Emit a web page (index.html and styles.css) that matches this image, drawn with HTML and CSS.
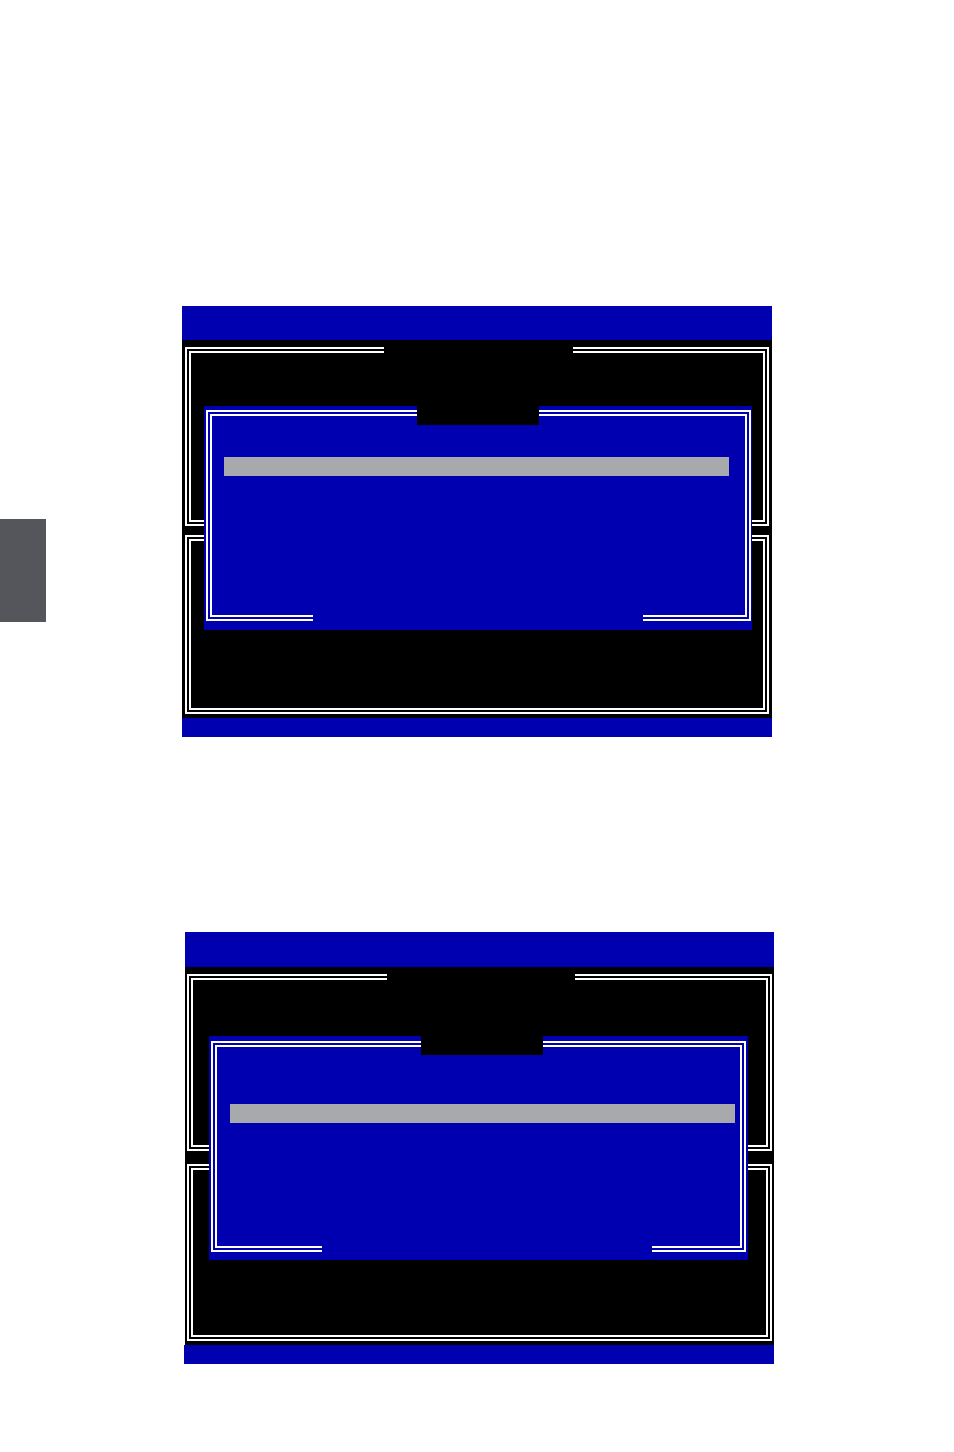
FILE: index.html
```html
<!DOCTYPE html>
<html lang="en">
  <head>
    <meta charset="UTF-8" />
    <title>RAID Setup</title>
    <link rel="stylesheet" href="styles.css">
  </head>
  <body>
    <div class="page">
      <div class="row-first">
        <div class="side-tab"></div>

        <div class="screen screen-a">
          <div class="screen-head"></div>
          <div class="screen-body">
            <div class="frame">
              <div class="frame-title"></div>
            </div>
            <div class="frame"></div>

            <div class="dialog">
              <div class="dialog-frame">
                <div class="dialog-title"></div>
                <div class="dialog-item selected"></div>
                <div class="dialog-foot"></div>
              </div>
            </div>
          </div>
          <div class="screen-foot"></div>
        </div>
      </div>

      <div class="screen screen-b">
        <div class="screen-head"></div>
        <div class="screen-body">
          <div class="frame">
            <div class="frame-title"></div>
          </div>
          <div class="frame"></div>

          <div class="dialog">
            <div class="dialog-frame">
              <div class="dialog-title"></div>
              <div class="dialog-item selected"></div>
              <div class="dialog-foot"></div>
            </div>
          </div>
        </div>
        <div class="screen-foot"></div>
      </div>
    </div>
  </body>
</html>
```

FILE: styles.css
```css
* {
  box-sizing: border-box;
}

body {
  margin: 0;
  background-color: #ffffff;
  font-family: "Liberation Sans", Arial, sans-serif;
}

.page {
  padding-top: 306px;
  padding-bottom: 88px;
}

.row-first {
  display: flex;
  align-items: flex-start;
}

/* chapter tab on the page edge */
.side-tab {
  width: 46px;
  height: 103px;
  margin-top: 213px;
  background: #55565b;
}

/* bios screen */
.screen {
  background: #000000;
}

.screen-head,
.screen-foot {
  background: #0000b0;
}

.screen-foot {
  height: 19px;
}

.screen-body {
  position: relative;
  height: 378px;
  display: flex;
  flex-direction: column;
}

.frame {
  border: 6px double #ffffff;
}

.frame-title {
  height: 6px;
  margin-top: -6px;
  background: #000000;
}

/* popup window over the frames */
.dialog {
  position: absolute;
  height: 224px;
  background: #0000b0;
}

.dialog-frame {
  height: 211px;
  border: 6px double #ffffff;
  display: flex;
  flex-direction: column;
}

.dialog-title {
  width: 122px;
  height: 19px;
  background: #000000;
}

.dialog-item {
  width: 505px;
  height: 19px;
}

.dialog-item.selected {
  background: #a8a9ac;
}

.dialog-foot {
  width: 330px;
  height: 6px;
  margin-top: auto;
  margin-bottom: -6px;
  background: #0000b0;
}

/* first screen */
.screen-a {
  width: 590px;
  margin-left: 136px;
}

.screen-a .screen-head {
  height: 34px;
}

.screen-a .screen-body {
  padding: 7px 3px 4px 3px;
  gap: 9px;
}

.screen-a .frame {
  height: 179px;
}

.screen-a .frame-title {
  width: 189px;
  margin-left: 193px;
}

.screen-a .dialog {
  top: 66px;
  left: 22px;
  width: 548px;
  padding: 4px 1px 9px 2px;
}

.screen-a .dialog-title {
  margin: -10px 0 0 205px;
}

.screen-a .dialog-item {
  margin: 32px 0 0 12px;
}

.screen-a .dialog-foot {
  margin-left: 101px;
}

/* second screen */
.screen-b {
  width: 589px;
  margin-top: 195px;
  margin-left: 185px;
}

.screen-b .screen-head {
  height: 35px;
}

.screen-b .screen-body {
  padding: 7px 2px 4px 2px;
  gap: 13px;
}

.screen-b .frame {
  height: 177px;
}

.screen-b .frame-title {
  width: 188px;
  margin-left: 194px;
}

.screen-b .screen-foot {
  margin-left: -1px;
}

.screen-b .dialog {
  top: 69px;
  left: 24px;
  width: 539px;
  padding: 5px 2px 8px 2px;
}

.screen-b .dialog-title {
  margin: -11px 0 0 204px;
}

.screen-b .dialog-item {
  margin: 49px 0 0 13px;
}

.screen-b .dialog-foot {
  margin-left: 105px;
}
```
